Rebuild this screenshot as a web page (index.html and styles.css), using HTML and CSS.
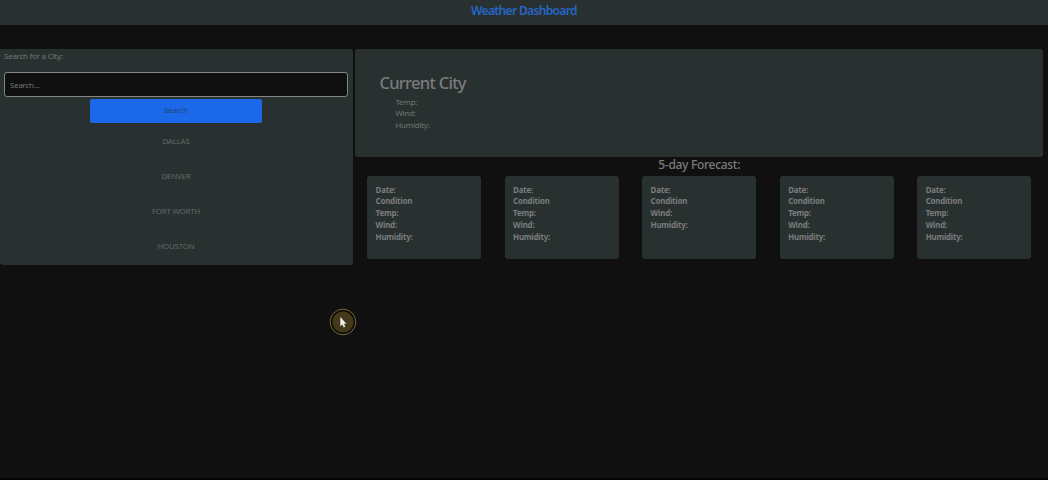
FILE: index.html
```html
<!DOCTYPE html>
<html lang="en">
<head>
<meta charset="utf-8">
<title>Weather Dashboard</title>
<link rel="stylesheet" href="styles.css">
</head>
<body>
<header class="header"><h1 class="title">Weather Dashboard</h1></header>
<main class="layout">
  <aside class="sidebar">
    <label class="label" for="city">Search for a City:</label>
    <input class="field" id="city" type="text" placeholder="Search...">
    <button class="search">Search</button>
    <ul class="cities">
      <li>DALLAS</li>
      <li>DENVER</li>
      <li>FORT WORTH</li>
      <li>HOUSTON</li>
    </ul>
  </aside>
  <div class="content">
    <section class="current">
      <h2 class="city-name">Current City</h2>
      <ul class="stats"><li>Temp:</li><li>Wind:</li><li>Humidity:</li></ul>
    </section>
    <h3 class="forecast-title">5-day Forecast:</h3>
    <section class="forecast">
      <ul class="card"><li>Date:</li><li>Condition</li><li>Temp:</li><li>Wind:</li><li>Humidity:</li></ul>
      <ul class="card"><li>Date:</li><li>Condition</li><li>Temp:</li><li>Wind:</li><li>Humidity:</li></ul>
      <ul class="card"><li>Date:</li><li>Condition</li><li>Wind:</li><li>Humidity:</li></ul>
      <ul class="card"><li>Date:</li><li>Condition</li><li>Temp:</li><li>Wind:</li><li>Humidity:</li></ul>
      <ul class="card"><li>Date:</li><li>Condition</li><li>Temp:</li><li>Wind:</li><li>Humidity:</li></ul>
    </section>
  </div>
</main>
<div class="bottom-edge"></div>
<svg class="pointer" width="28" height="28" viewBox="0 0 28 28">
  <circle cx="14" cy="14" r="12.8" fill="#0b0a08" stroke="#75683a" stroke-width="1"/>
  <circle cx="14" cy="14" r="10.6" fill="#43391a"/>
  <path d="M11.3 9v9.2l2-1.8 1.5 3 1.5-.8-1.4-2.8h2.5z" fill="#eee"/>
</svg>
</body>
</html>
```

FILE: styles.css
```css
* { box-sizing: border-box; }
body {
  margin: 0;
  height: 480px;
  overflow: hidden;
  display: flex;
  flex-direction: column;
  background: #101010;
  color: #7b7b7d;
  font: 7.9px/11.8px "Noto Sans", "Open Sans", sans-serif;
  letter-spacing: -0.2px;
}
h1, h2, h3, ul { margin: 0; padding: 0; }
ul { list-style: none; }
.header { height: 25px; background: #293130; text-align: center; }
.title {
  color: #2766c9;
  font-size: 12px;
  line-height: 22px;
  font-weight: 600;
  letter-spacing: -0.65px;
}
.layout { display: flex; gap: 2px; align-items: flex-start; padding: 24px 5px 0 0; flex: 1; }
.sidebar {
  width: 353.4px;
  height: 216px;
  padding: 0 5.4px 0 4px;
  display: flex;
  flex-direction: column;
  background: #293130;
  border-radius: 0 3px 3px 3px;
}
.label { height: 23px; line-height: 14px; color: #737476; }
.field {
  height: 25px;
  padding: 0 5px;
  border: 1px solid #858585;
  border-radius: 3px;
  background: #101010;
  color: #7b7b7d;
  font: inherit;
  letter-spacing: inherit;
}
.field::placeholder { color: #737476; opacity: 1; }
.search {
  width: 172px;
  height: 24px;
  margin: 2px auto 0;
  padding: 0;
  border: 0;
  border-radius: 2px;
  background: #1b69e8;
  color: #204574;
  font: inherit;
  letter-spacing: inherit;
}
.cities { padding-top: 0.6px; color: #636768; text-align: center; }
.cities li { height: 35.3px; line-height: 35.3px; }
.content { flex: 1; }
.current {
  height: 108px;
  padding: 24px;
  background: #293130;
  border-radius: 3px;
}
.city-name { font-size: 16.5px; line-height: 20px; font-weight: 500; letter-spacing: -0.7px; }
.stats { padding: 3.5px 0 0 16px; color: #737476; }
.forecast-title {
  height: 18.5px;
  font-size: 12px;
  line-height: 15px;
  font-weight: 500;
  letter-spacing: -0.3px;
  text-align: center;
}
.forecast { display: flex; gap: 23.2px; padding: 0 11.6px; }
.card {
  flex: 1;
  height: 83.5px;
  padding: 9px 8.6px;
  background: #293130;
  border-radius: 3px;
  font-weight: 700;
}
.bottom-edge { height: 2px; background: #070206; }
.pointer { position: absolute; left: 329.3px; top: 308px; }
```
